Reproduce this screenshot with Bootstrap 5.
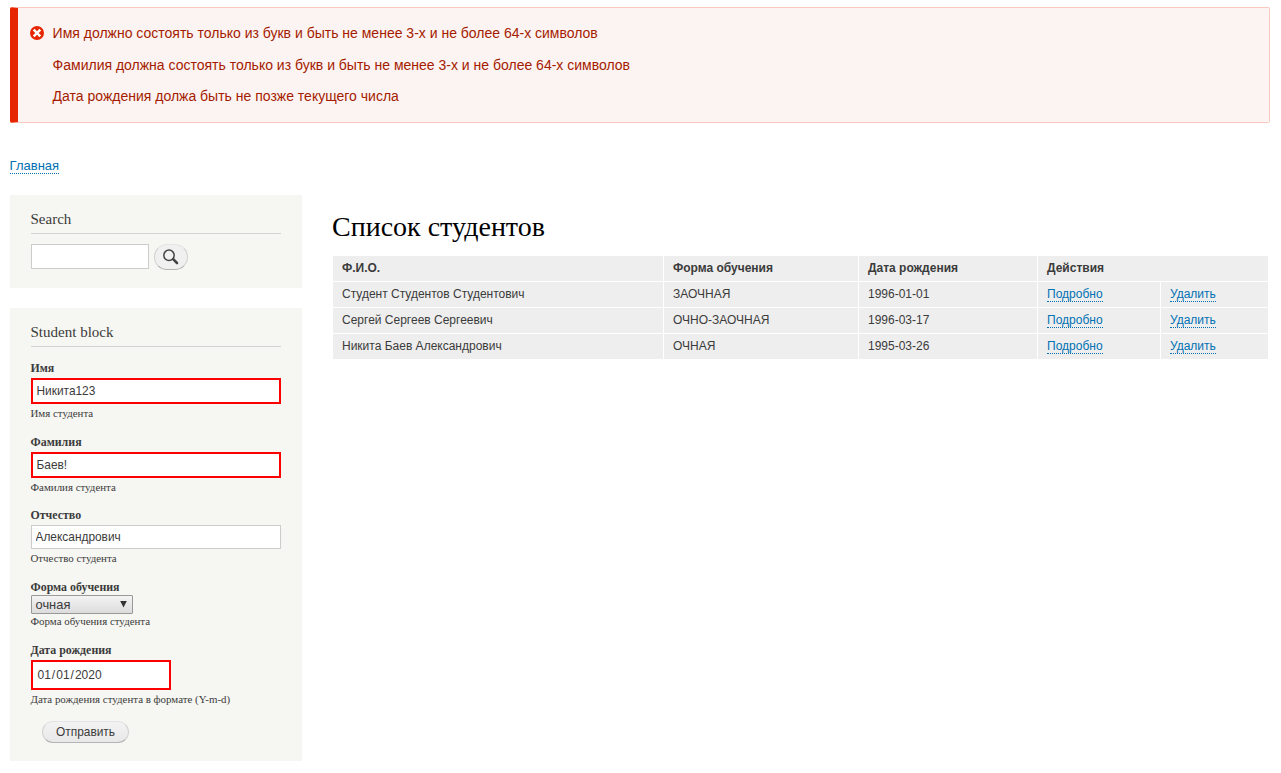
<!DOCTYPE html>
<html lang="ru">
<head>
<meta charset="utf-8">
<title>Список студентов</title>
<link rel="stylesheet" href="https://cdn.jsdelivr.net/npm/bootstrap@5.3.0/dist/css/bootstrap.min.css">
<style>
body { font-family: "Liberation Sans", Arial, sans-serif; font-size: 12px; color: #3b3b3b; background: #fff; }
a { color: #0071b3; text-decoration: none; border-bottom: 1px dotted #0071b3; }
.serif { font-family: "Liberation Serif", "Times New Roman", serif; }
.page { padding: 7px 11px 0 10px; }
.messages { height: 116px; padding: 15px 15px 0 12px; border: 1px solid #f9c9bf; border-left: 8px solid #e62600; border-radius: 2px; background: #fcf4f2; color: #a51b00; font-size: 14px; line-height: 21px; gap: 8.6px; }
.messages svg { margin-top: 3px; flex: none; }
.messages ul { gap: 10.5px; }
.crumbs { font-size: 13px; line-height: 14px; margin: 36px 0 0 -.4px; height: 36px; }
.crumbs a { display: inline-block; height: 15px; }
.side { width: 292px; flex: none; gap: 20.5px; }
.block { background: #f6f6f2; padding: 14px 21px 0 20.5px; border-radius: 0; }
.block h2 { font-size: 15px; line-height: 20px; height: 25px; border-bottom: 1px solid #d3d3d3; margin: 0; color: #3b3b3b; font-weight: 400; letter-spacing: .01px; }
.search-block { height: 92.5px; }
.search-form { padding-top: 10px; gap: 5px; }
.student-block { height: 452.5px; }
.form-control { border: 1px solid #ccc; border-radius: 0; padding: 0 4px; font-size: 11.9px; line-height: 18px; height: 24px; color: #3b3b3b; min-height: 0; }
.form-control.bad { border: 2px solid red; height: 26px; }
.form-control.find { width: 118px; height: 25px; }
.form-control.date { width: 140px; height: 30px; padding-left: 4.5px; line-height: 26px; font-size: 12px; }
.date span { padding: 0 .5px; }
.pill { border: 1px solid #e4e4e4; border-left-color: #d2d2d2; border-right-color: #d2d2d2; border-bottom-color: #b4b4b4; border-radius: 20px; background: linear-gradient(#f3f3f3, #e8e8e8); color: #3a3a3a; font-size: 12px; line-height: 18px; padding: 0; }
.pill.go { width: 34px; height: 26px; background: #f0f0f0; }
.pill.go svg { margin-top: 2.5px; }
.pill.send { width: 87px; height: 22px; margin: 1px 0 0 11px; line-height: 20px; font-size: 11.9px; padding-left: 1px; }
.fields { padding-top: 13.3px; }
.item { margin-bottom: 12.5px; }
.item label { display: block; font-size: 11.9px; font-weight: 700; line-height: 16px; margin-bottom: 2px; }
.item .hint { font-size: 10.9px; line-height: 16px; margin-top: 1px; }
.item.pick { margin-bottom: 13.3px; }
.item.pick label { margin-bottom: 0; }
.item.pick .hint { margin-top: -1px; }
.picker { width: 102px; height: 19px; border: 1px solid #999; border-radius: 1px; background: linear-gradient(#f4f4f4, #dcdcdc); font-size: 12.9px; line-height: 17px; padding: 0 4.5px 0 4px; }
.picker svg { margin-top: 5px; }
h1 { font-size: 28px; line-height: 34px; margin: 0; color: #000; font-weight: 400; }
.content { width: 938px; margin-left: 30px; padding-top: 15px; }
.students { width: 937px; table-layout: fixed; border-collapse: separate; border-spacing: 1px; margin-top: 11px; line-height: 18px; }
.students th, .students td { background: #eee; height: 25px; padding: 0 9px; vertical-align: top; line-height: 24px; }
.students a { display: inline-block; line-height: 13px; height: 14px; vertical-align: baseline; }
.c-name { width: 330px; } .c-form { width: 194px; } .c-birth { width: 178px; } .c-view { width: 122px; } .c-del { width: 107px; }
</style>
</head>
<body>
<div class="page">
  <div class="messages d-flex" role="alert">
    <svg width="14" height="14" viewBox="0 0 14 14"><circle cx="7" cy="7" r="7" fill="#e62600"/><path d="M3.7 3.7l6.6 6.6M10.3 3.7l-6.6 6.6" stroke="#fff" stroke-width="2.5"/></svg>
    <ul class="list-unstyled d-flex flex-column m-0">
      <li>Имя должно состоять только из букв и быть не менее 3-х и не более 64-х символов</li>
      <li>Фамилия должна состоять только из букв и быть не менее 3-х и не более 64-х символов</li>
      <li>Дата рождения должа быть не позже текущего числа</li>
    </ul>
  </div>
  <nav class="crumbs"><a href="#">Главная</a></nav>
  <div class="d-flex align-items-start">
    <aside class="side d-flex flex-column">
      <section class="block search-block">
        <h2 class="serif">Search</h2>
        <form class="search-form d-flex">
          <input class="form-control find" type="text" aria-label="Search">
          <button class="pill go d-flex justify-content-center" type="button" aria-label="Search"><svg width="18" height="18" viewBox="0 0 18 18"><circle cx="7" cy="7.3" r="5.2" fill="none" stroke="#444" stroke-width="1.5"/><path d="M11.2 11.2l3.8 3.8" stroke="#444" stroke-width="2.6" stroke-linecap="round"/></svg></button>
        </form>
      </section>
      <section class="block student-block">
        <h2 class="serif">Student block</h2>
        <form class="fields">
          <div class="item"><label class="serif">Имя</label><input class="form-control bad" value="Никита123"><div class="hint serif">Имя студента</div></div>
          <div class="item"><label class="serif">Фамилия</label><input class="form-control bad" value="Баев!"><div class="hint serif">Фамилия студента</div></div>
          <div class="item"><label class="serif">Отчество</label><input class="form-control" value="Александрович"><div class="hint serif">Отчество студента</div></div>
          <div class="item pick"><label class="serif">Форма обучения</label><div class="picker d-flex justify-content-between"><span>очная</span><svg width="7" height="7" viewBox="0 0 7 7"><path d="M.2 0h6.6L3.5 6.5z" fill="#333"/></svg></div><div class="hint serif">Форма обучения студента</div></div>
          <div class="item"><label class="serif">Дата рождения</label><div class="form-control bad date"><span>01</span><span>/</span><span>01</span><span>/</span><span>2020</span></div><div class="hint serif">Дата рождения студента в формате (Y-m-d)</div></div>
          <button class="pill send" type="button">Отправить</button>
        </form>
      </section>
    </aside>
    <main class="content">
      <h1 class="serif">Список студентов</h1>
      <table class="students">
        <colgroup><col class="c-name"><col class="c-form"><col class="c-birth"><col class="c-view"><col class="c-del"></colgroup>
        <thead><tr><th>Ф.И.О.</th><th>Форма обучения</th><th>Дата рождения</th><th colspan="2">Действия</th></tr></thead>
        <tbody>
          <tr><td>Студент Студентов Студентович</td><td>ЗАОЧНАЯ</td><td>1996-01-01</td><td><a href="#">Подробно</a></td><td><a href="#">Удалить</a></td></tr>
          <tr><td>Сергей Сергеев Сергеевич</td><td>ОЧНО-ЗАОЧНАЯ</td><td>1996-03-17</td><td><a href="#">Подробно</a></td><td><a href="#">Удалить</a></td></tr>
          <tr><td>Никита Баев Александрович</td><td>ОЧНАЯ</td><td>1995-03-26</td><td><a href="#">Подробно</a></td><td><a href="#">Удалить</a></td></tr>
        </tbody>
      </table>
    </main>
  </div>
</div>
<script src="https://cdn.jsdelivr.net/npm/bootstrap@5.3.0/dist/js/bootstrap.bundle.min.js"></script>
</body>
</html>
